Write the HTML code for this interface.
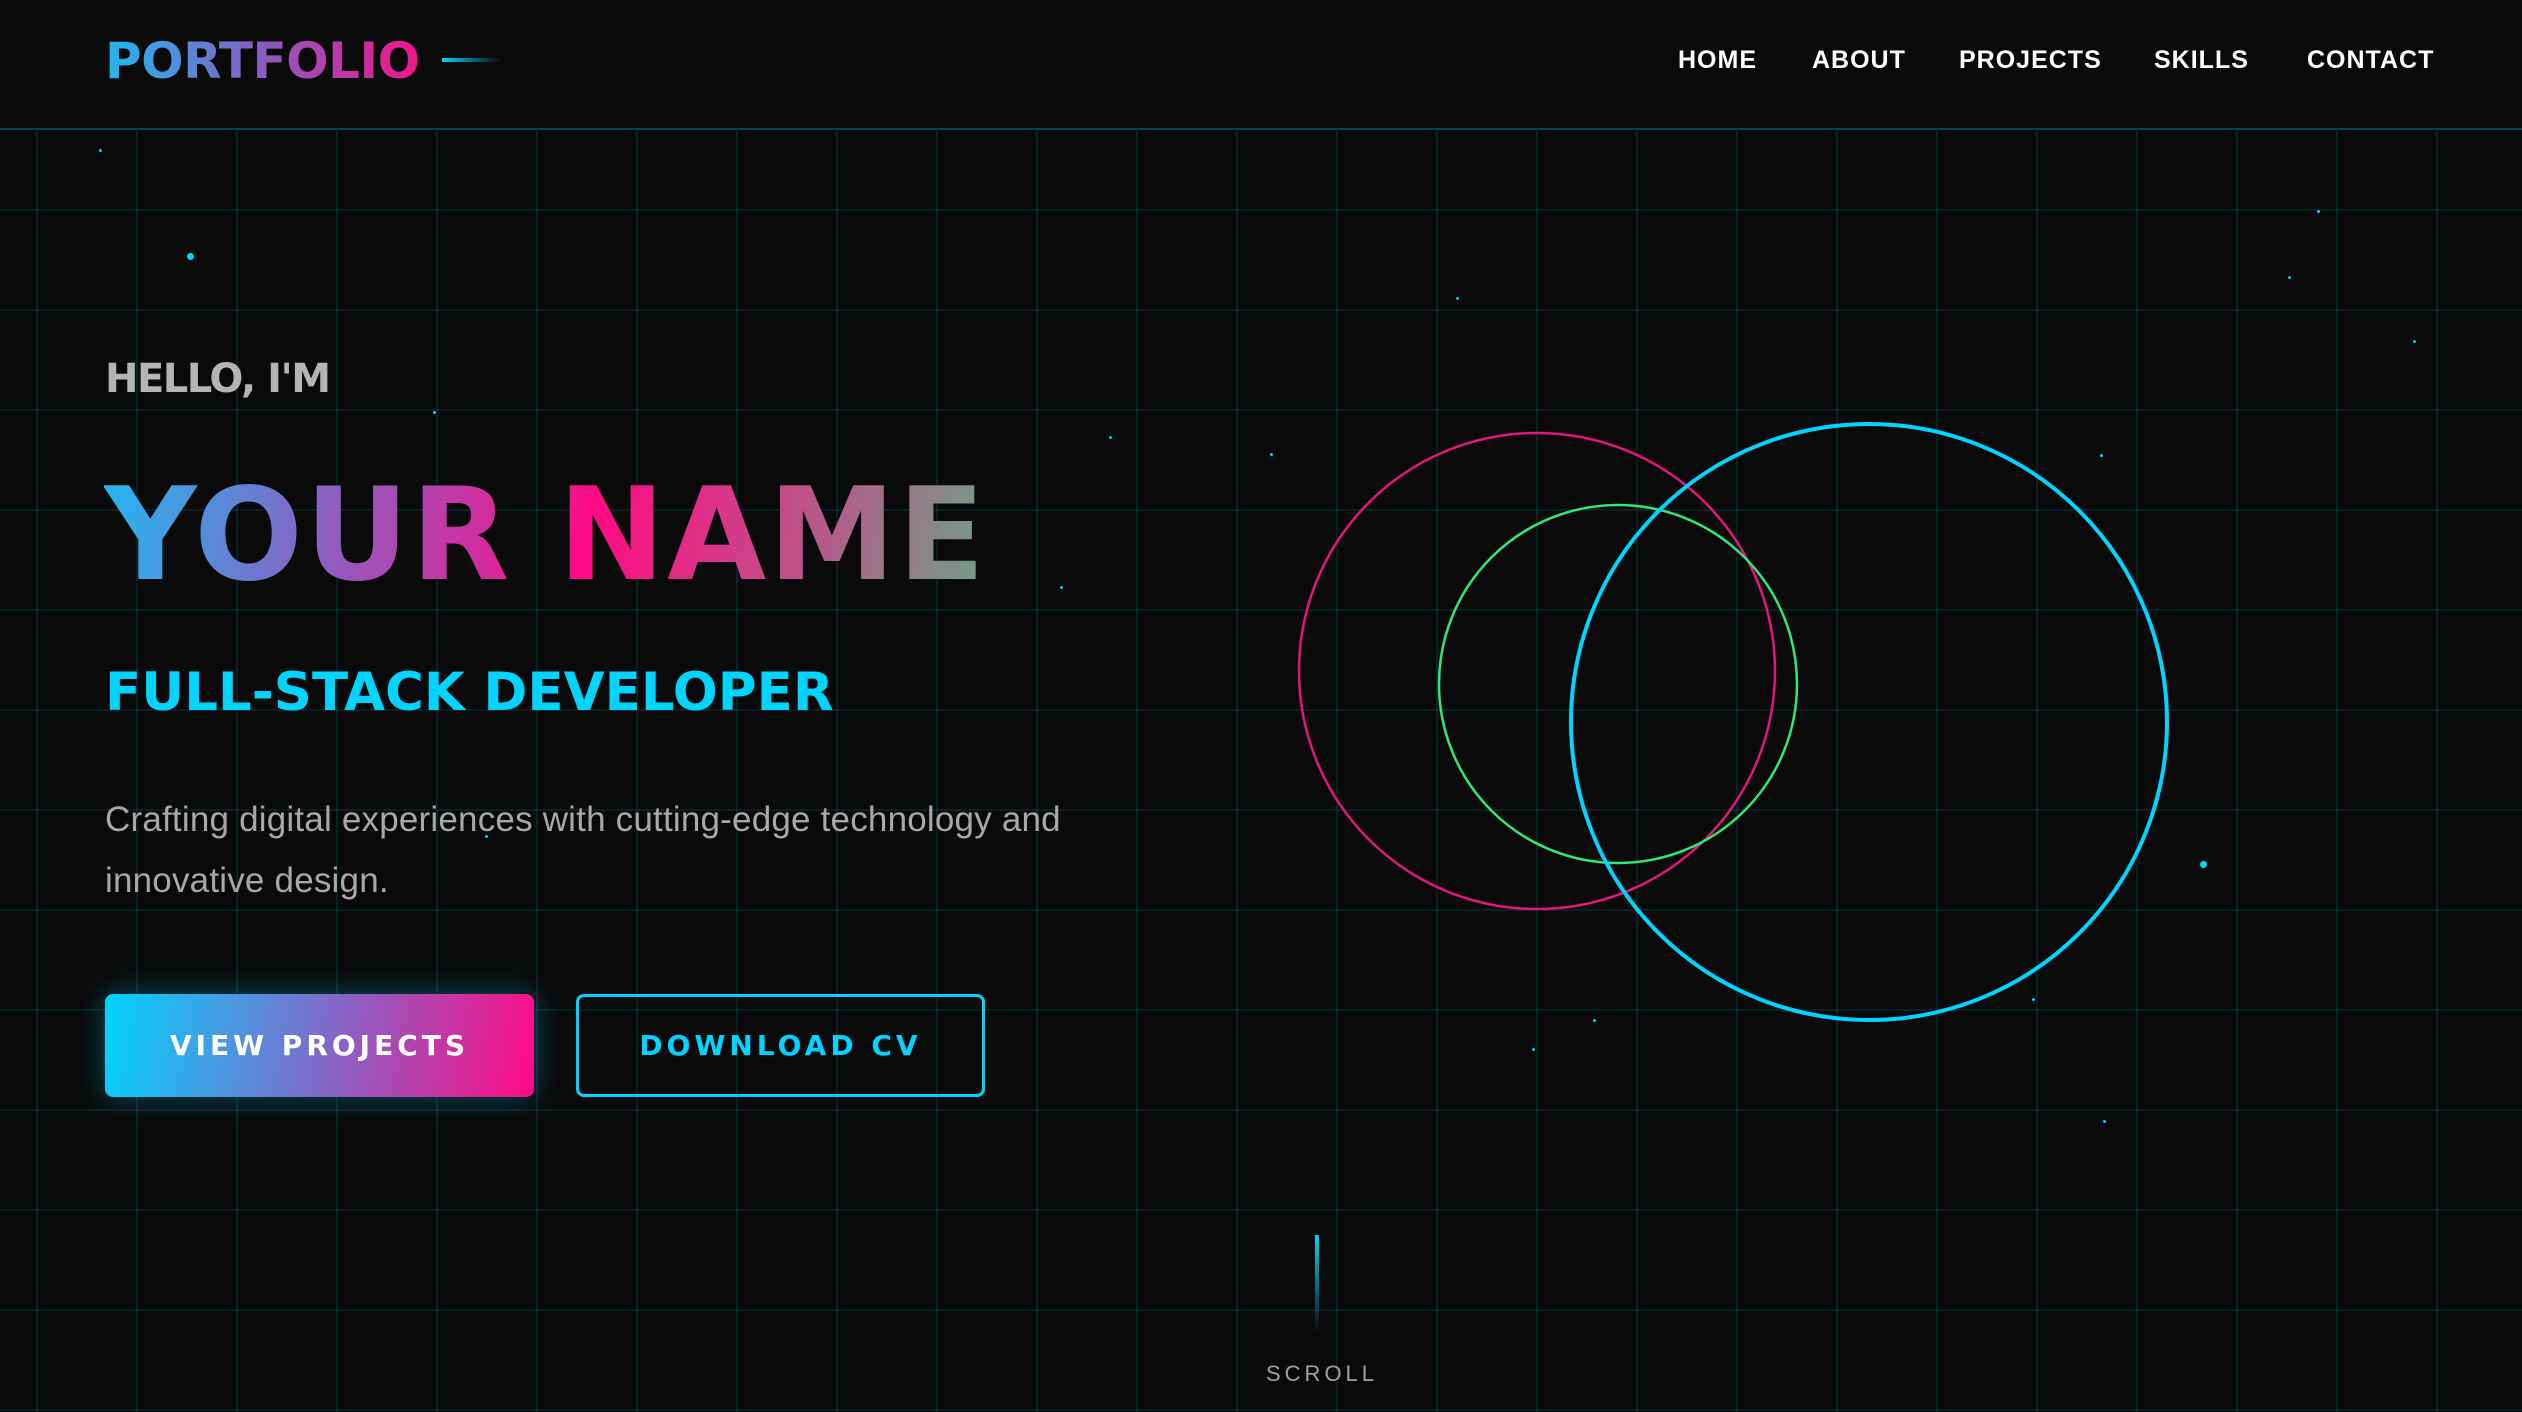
<!DOCTYPE html>
<html><head><meta charset="utf-8"><style>
*{margin:0;padding:0;box-sizing:border-box}
html,body{width:2522px;height:1412px;overflow:hidden;background:#0a0a0a}
body{position:relative;font-family:"DejaVu Sans","Liberation Sans",sans-serif}
.grid{position:absolute;left:0;top:130px;width:2522px;height:1282px;
background-image:linear-gradient(90deg,rgba(0,212,255,0.11) 2px,transparent 2px),linear-gradient(0deg,rgba(0,212,255,0.11) 2px,transparent 2px);
background-size:100px 100px;background-position:36px 0,0 81px}
.hdr{position:absolute;left:0;top:0;width:2522px;height:130px;background:#0a0a0a;border-bottom:2px solid rgba(0,212,255,0.3)}
.logo{position:absolute;left:105px;top:36px;font-weight:bold;font-size:50px;line-height:50px;letter-spacing:-0.5px;
background:linear-gradient(90deg,#1fb8f0,#8a5cc0 50%,#f0148c);-webkit-background-clip:text;background-clip:text;color:transparent}
.logoline{position:absolute;left:442px;top:58px;width:58px;height:4px;background:linear-gradient(90deg,#00d4ff,transparent)}
.nav{position:absolute;top:44px;font-family:"Liberation Sans",sans-serif;font-weight:bold;font-size:25px;line-height:32px;color:#fff;letter-spacing:1px}
.t{position:absolute;white-space:nowrap}
.dot{position:absolute;border-radius:50%;background:#00d4ff}
</style></head><body>
<div class="grid"></div>
<div class="hdr"></div>
<div class="logo">PORTFOLIO</div>
<div class="logoline"></div>
<div class="nav" style="left:1678px">HOME</div>
<div class="nav" style="left:1812px">ABOUT</div>
<div class="nav" style="left:1959px">PROJECTS</div>
<div class="nav" style="left:2154px">SKILLS</div>
<div class="nav" style="left:2307px">CONTACT</div>

<svg style="position:absolute;left:0;top:0" width="2522" height="1412">
<circle cx="1537" cy="671" r="238" fill="none" stroke="#e0187a" stroke-width="2.5"/>
<circle cx="1618" cy="684" r="179" fill="none" stroke="#2ee87a" stroke-width="2.5"/>
<circle cx="1869" cy="722" r="298" fill="none" stroke="#00d4ff" stroke-width="4"/>
</svg>

<div class="t" style="left:105px;top:355px;font-size:40px;line-height:48px;font-weight:bold;color:#b4b4b4;letter-spacing:-1.5px">HELLO, I'M</div>
<div class="t" style="left:104px;top:466px;font-size:128px;line-height:140px;font-weight:bold;letter-spacing:2px;background:linear-gradient(100deg,#22b8f0 0%,#8a62c4 25%,#ff0a84 55%,#c84888 75%,#70a088 100%);-webkit-background-clip:text;background-clip:text;color:transparent">YOUR NAME</div>
<div class="t" style="left:105px;top:662px;font-size:53px;line-height:62px;font-weight:bold;color:#00d4ff">FULL-STACK DEVELOPER</div>
<div class="t" style="left:105px;top:789px;font-family:'Liberation Sans',sans-serif;font-size:35px;line-height:61px;color:#a8a8a8;letter-spacing:0.2px">Crafting digital experiences with cutting-edge technology and<br>innovative design.</div>

<div style="position:absolute;left:105px;top:994px;width:429px;height:103px;border-radius:8px;background:linear-gradient(100deg,#00d4ff,#8a62c4 55%,#ff0a84);box-shadow:0 0 30px rgba(0,212,255,0.35);color:#fff;font-weight:bold;font-size:28px;letter-spacing:4px;text-align:center;line-height:103px">VIEW PROJECTS</div>
<div style="position:absolute;left:576px;top:994px;width:409px;height:103px;border-radius:8px;border:3px solid #00d4ff;color:#00d4ff;font-weight:bold;font-size:28px;letter-spacing:4px;text-align:center;line-height:97px">DOWNLOAD CV</div>

<div style="position:absolute;left:1315px;top:1235px;width:4px;height:98px;background:linear-gradient(#00d4ff,transparent)"></div>
<div class="t" style="left:1266px;top:1360px;font-family:'Liberation Sans',sans-serif;font-size:22px;line-height:28px;color:#a0a0a0;letter-spacing:4px">SCROLL</div>

<div class="dot" style="left:99px;top:149px;width:3px;height:3px"></div>
<div class="dot" style="left:187px;top:253px;width:7px;height:7px"></div>
<div class="dot" style="left:433px;top:411px;width:3px;height:3px"></div>
<div class="dot" style="left:1109px;top:436px;width:3px;height:3px"></div>
<div class="dot" style="left:1060px;top:586px;width:3px;height:3px"></div>
<div class="dot" style="left:485px;top:835px;width:3px;height:3px"></div>
<div class="dot" style="left:1270px;top:453px;width:3px;height:3px"></div>
<div class="dot" style="left:1456px;top:297px;width:3px;height:3px"></div>
<div class="dot" style="left:2317px;top:210px;width:3px;height:3px"></div>
<div class="dot" style="left:2288px;top:276px;width:3px;height:3px"></div>
<div class="dot" style="left:2413px;top:340px;width:3px;height:3px"></div>
<div class="dot" style="left:2100px;top:454px;width:3px;height:3px"></div>
<div class="dot" style="left:2200px;top:861px;width:7px;height:7px"></div>
<div class="dot" style="left:2032px;top:998px;width:3px;height:3px"></div>
<div class="dot" style="left:1593px;top:1019px;width:3px;height:3px"></div>
<div class="dot" style="left:1532px;top:1048px;width:3px;height:3px"></div>
<div class="dot" style="left:2103px;top:1120px;width:3px;height:3px"></div>
</body></html>
